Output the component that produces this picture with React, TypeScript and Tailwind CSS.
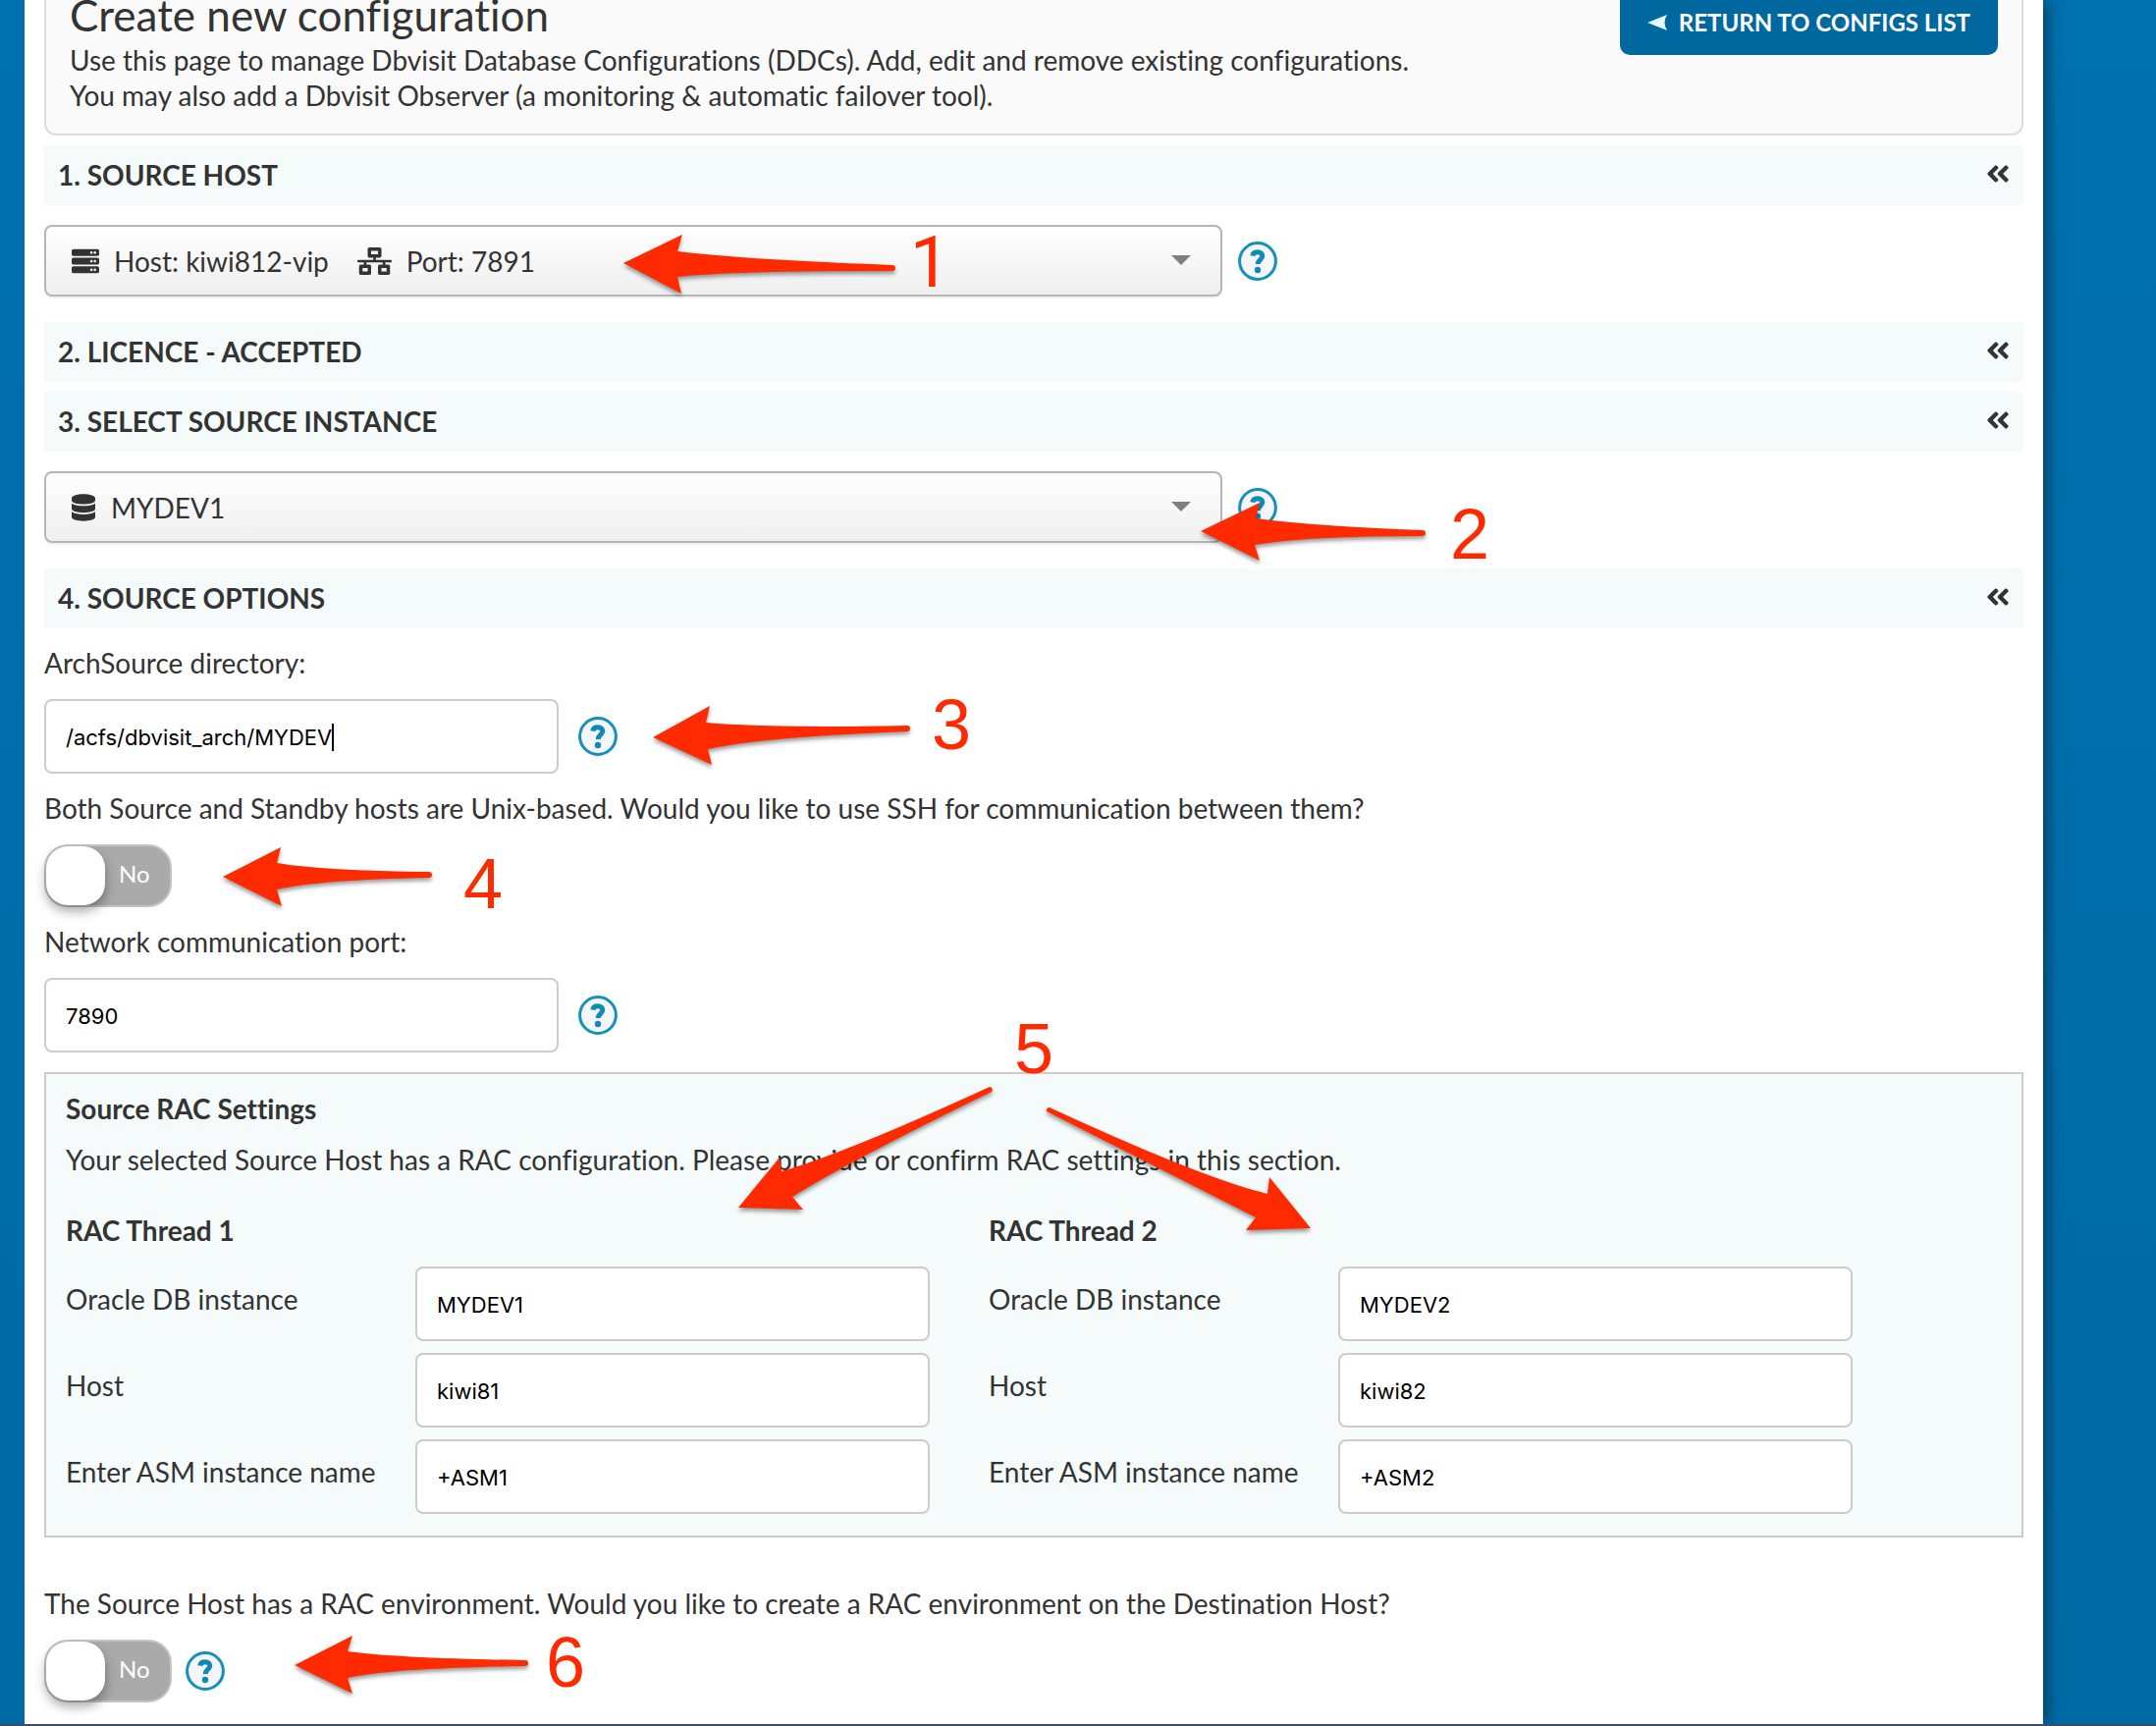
import { FaAngleDoubleLeft, FaDatabase, FaNetworkWired, FaServer } from 'react-icons/fa'

const threads = [
  { id: 1, instance: 'MYDEV1', host: 'kiwi81', asm: '+ASM1' },
  { id: 2, instance: 'MYDEV2', host: 'kiwi82', asm: '+ASM2' },
]

const arrows = [
  'M635 268L695 239L690 256Q765 265 909 270A3 3 0 0 1 909 276Q742 276 690 282L694 299Z',
  'M1223 541L1283 512L1279 528Q1340 536 1449 540A3 3 0 0 1 1449 546Q1330 546 1278 555L1283 571Z',
  'M665 751L723 719L719 736Q790 742 924 739A3 3 0 0 1 924 745Q775 751 721 763L725 779Z',
  'M227 893L286 863L282 879Q330 887 437 888A3 3 0 0 1 437 894Q325 896 282 906L287 923Z',
  'M752 1230L794 1179L796 1193Q860 1175 1008 1107A3 3 0 0 1 1010 1112Q870 1180 807 1219L818 1232Z',
  'M1335 1251L1293 1199L1291 1216Q1225 1200 1069 1128A3 3 0 0 0 1066 1132Q1220 1210 1279 1240L1269 1253Z',
  'M300 1696L359 1666L354 1682Q405 1689 535 1691A3 3 0 0 1 535 1697Q400 1699 354 1709L359 1725Z',
]

function HelpButton() {
  return (
    <button type="button" aria-label="Help" className="size-10 shrink-0">
      <svg viewBox="0 0 40 40" className="size-10">
        <circle cx="20" cy="20" r="18.4" fill="#f4f6fa" stroke="#1590bb" strokeWidth="3" />
        <path
          d="M14.8 14.6C15.2 11.6 17.4 10.8 20 10.8C23 10.8 24.8 12.4 24.8 14.8C24.8 18.2 20.2 18.6 20.2 23"
          fill="none"
          stroke="#0f8ab8"
          strokeWidth="5"
        />
        <circle cx="20" cy="29" r="3.2" fill="#0f8ab8" />
      </svg>
    </button>
  )
}

function SectionBar({ title }: { title: string }) {
  return (
    <div className="flex h-[61px] items-center justify-between bg-[#f5fbfb] px-3.5 pb-0.5">
      <h2 className="font-bold">{title}</h2>
      <button type="button" aria-label={`Collapse ${title}`} className="pb-0.5">
        <FaAngleDoubleLeft className="h-7 w-6" />
      </button>
    </div>
  )
}

function SelectBox({ label, value, icons, indent }: any) {
  return (
    <div className="mt-5 mb-[26px] flex items-center gap-4">
      <div className="relative w-[1200px]">
        {icons}
        <select
          aria-label={label}
          className={`h-[73px] w-full appearance-none rounded-lg border-2 border-[#b5b5b5] bg-linear-to-b from-white to-[#efefef] shadow-[0_2px_1px_rgba(0,0,0,0.06)] ${indent}`}
        >
          <option>{value}</option>
        </select>
        <svg viewBox="0 0 20 10" className="pointer-events-none absolute top-[31px] right-8 h-2.5 w-5">
          <path d="M0 0H20L10 10Z" fill="#808080" />
        </svg>
      </div>
      <HelpButton />
    </div>
  )
}

function TextInput({ id, value }: { id: string; value: string }) {
  return (
    <input
      id={id}
      defaultValue={value}
      className="h-[76px] w-[524px] rounded-lg border-2 border-[#ccc] bg-white px-5 pt-0.5 font-[Inter,sans-serif] text-[22px] text-black outline-none"
    />
  )
}

function Toggle({ label }: { label: string }) {
  return (
    <label className="relative flex h-16 w-[130px] items-center rounded-[24px] border-2 border-[#c4c4c4] bg-[#aaa]">
      <input type="checkbox" role="switch" aria-label={label} className="absolute size-full appearance-none" />
      <span className="h-15 w-15 rounded-[22px] bg-white shadow-[0_6px_12px_rgba(0,0,0,0.35)]" />
      <span className="pb-1 pl-3.5 text-2xl text-white">No</span>
    </label>
  )
}

function Field({ id, label, value }: { id: string; label: string; value: string }) {
  return (
    <div className="flex">
      <label htmlFor={id} className="w-[356px] pt-[15px]">
        {label}
      </label>
      <TextInput id={id} value={value} />
    </div>
  )
}

function Mark({ n, className }: { n: number; className: string }) {
  return <span className={`absolute text-[72px] leading-[72px] ${className}`}>{n}</span>
}

function Annotations() {
  return (
    <div className="pointer-events-none absolute top-0 left-0 font-['Liberation_Sans',Arial,sans-serif] text-[#ff2a00]">
      <svg width="1400" height="1750" viewBox="0 0 1400 1750" className="max-w-none overflow-visible drop-shadow-[0_3px_2px_rgba(0,0,0,0.4)]">
        {arrows.map((d) => (
          <path key={d} d={d} fill="#ff2a00" />
        ))}
      </svg>
      <Mark n={1} className="top-[232px] left-[927px] font-[Roboto,sans-serif]" />
      <Mark n={2} className="top-[508px] left-[1477px]" />
      <Mark n={3} className="top-[702px] left-[949px]" />
      <Mark n={4} className="top-[864px] left-[472px]" />
      <Mark n={5} className="top-[1032px] left-[1033px]" />
      <Mark n={6} className="top-[1657px] left-[556px]" />
    </div>
  )
}

export default function App() {
  return (
    <div className="relative min-h-screen overflow-hidden border-b-2 border-[#3f4b6b] bg-linear-to-b from-[#0070ae] to-[#006aa5] pr-[115px] pl-[25px] font-[Lato,sans-serif] text-[28px] leading-9 text-[#333] [font-variant-ligatures:no-common-ligatures]">
      <main className="min-h-[1756px] bg-white px-5 pb-[22px] shadow-[8px_0_12px_-2px_rgba(0,0,0,0.35)]">
        <header className="flex h-[138px] items-start justify-between rounded-b-xl border-2 border-t-0 border-[#ddd] bg-[#fafafa] px-6">
          <div>
            <h1 className="-mt-[7px] mb-1.5 text-[44px] leading-[44px]">Create new configuration</h1>
            <p>
              Use this page to manage Dbvisit Database Configurations (DDCs). Add, edit and remove existing configurations.
              <br />
              You may also add a Dbvisit Observer (a monitoring &amp; automatic failover tool).
            </p>
          </div>
          <a
            href="#configs"
            className="flex h-14 items-start gap-3 rounded-b-[10px] bg-[#00689f] px-7 pt-[5px] text-2xl leading-9 font-bold text-white"
          >
            <svg viewBox="0 0 20 16" className="mt-2.5 h-4 w-5">
              <path d="M0 8L20 0Q15 8 20 16Z" fill="#e6fbff" />
            </svg>
            RETURN TO CONFIGS LIST
          </a>
        </header>

        <div className="mt-2.5">
          <SectionBar title="1. SOURCE HOST" />
          <SelectBox
            label="Source host"
            value={'Host: kiwi812-vip' + '\u00a0'.repeat(11) + 'Port: 7891'}
            indent="pl-[69px]"
            icons={
              <>
                <FaServer className="pointer-events-none absolute top-[23px] left-7 size-7" />
                <FaNetworkWired className="pointer-events-none absolute top-[23px] left-[319px] h-7 w-[35px]" />
              </>
            }
          />
          <SectionBar title="2. LICENCE - ACCEPTED" />
          <div className="mt-2.5">
            <SectionBar title="3. SELECT SOURCE INSTANCE" />
          </div>
          <SelectBox
            label="Source instance"
            value="MYDEV1"
            indent="pl-[66px]"
            icons={<FaDatabase className="pointer-events-none absolute top-[23px] left-7 h-7 w-6" />}
          />
          <SectionBar title="4. SOURCE OPTIONS" />
        </div>

        <div className="pt-[17px]">
          <label htmlFor="arch">ArchSource directory:</label>
          <div className="mt-[19px] flex items-center gap-5">
            <div className="relative">
              <TextInput id="arch" value="/acfs/dbvisit_arch/MYDEV" />
              {/* text cursor */}
              <span className="absolute top-[25px] left-[293px] h-7 w-0.5 bg-black" />
            </div>
            <HelpButton />
          </div>
          <p className="mt-[17px] mb-[19px]">
            Both Source and Standby hosts are Unix-based. Would you like to use SSH for communication between them?
          </p>
          <Toggle label="Use SSH" />
          <label htmlFor="port" className="mt-[17px] mb-[19px] block">
            Network communication port:
          </label>
          <div className="flex items-center gap-5">
            <TextInput id="port" value="7890" />
            <HelpButton />
          </div>
        </div>

        <section className="mt-5 border-2 border-[#ccc] bg-[#f5fbfb] px-5 pt-[17px] pb-[22px]">
          <h3 className="font-bold">Source RAC Settings</h3>
          <p className="mt-4">
            Your selected Source Host has a RAC configuration. Please provide or confirm RAC settings in this section.
          </p>
          <div className="mt-9 flex gap-15">
            {threads.map((t) => (
              <div key={t.id} className="flex flex-col gap-3">
                <h4 className="mb-[7px] font-bold">RAC Thread {t.id}</h4>
                <Field id={`db${t.id}`} label="Oracle DB instance" value={t.instance} />
                <Field id={`host${t.id}`} label="Host" value={t.host} />
                <Field id={`asm${t.id}`} label="Enter ASM instance name" value={t.asm} />
              </div>
            ))}
          </div>
        </section>

        <p className="mt-[49px] mb-[19px]">
          The Source Host has a RAC environment. Would you like to create a RAC environment on the Destination Host?
        </p>
        <div className="flex items-center gap-3.5">
          <Toggle label="Create RAC environment" />
          <HelpButton />
        </div>
      </main>
      <Annotations />
    </div>
  )
}
